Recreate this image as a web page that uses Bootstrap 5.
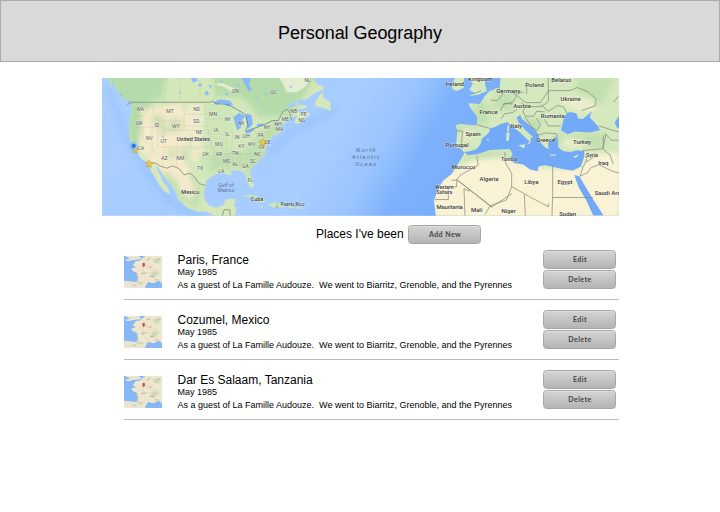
<!DOCTYPE html>
<html lang="en">
<head>
<meta charset="utf-8">
<meta name="viewport" content="width=device-width, initial-scale=1">
<title>Personal Geography</title>
<link rel="stylesheet" href="https://cdn.jsdelivr.net/npm/bootstrap@5.3.0/dist/css/bootstrap.min.css">
<style>
body{font-family:"Liberation Sans",Arial,sans-serif;color:#000;background:#fff;overflow:hidden}
.masthead{height:62px;background:#d9d9d9;border:1px solid #ababab;padding-top:5px}
.masthead h1{font-size:18px;letter-spacing:-.06px}
.page-body{width:517px;margin-left:102px;padding-top:16px}
.world{width:517px;height:137.5px;margin-bottom:.5px}
.toolbar-line{height:24px;padding-left:214px;padding-top:1px;margin-top:6px;gap:4px}
.toolbar-line h2{font-size:12px;width:88px;white-space:nowrap}
.btn.gray{width:73px;height:19px;padding:0 0 0 1px;font:bold 7px/17px Lato,sans-serif;letter-spacing:.45px;color:#444;border:1px solid #a6a6a6;border-radius:3.5px;background:linear-gradient(#d4d4d4,#b4b4b4);box-shadow:inset 0 1px 0 #dedede}
.places{margin-left:22px;width:495px;margin-top:-6px}
.place{height:60px;border-bottom:1px solid #bdbdbd}
.thumb{width:38px;height:32px;margin-top:16px;margin-left:-.5px}
.details{margin-left:16px;padding-top:13px;white-space:pre}
.details h3{font-size:12px;line-height:14px;margin-bottom:-1px!important}
.details p{font-size:9px;line-height:12px}
.details .note{line-height:14px}
.actions{padding-top:10px;gap:1px;margin-right:3px}
.world text{font-family:Roboto,sans-serif;font-size:15px;fill:#555;text-anchor:middle;stroke:#fff;stroke-opacity:.5;stroke-width:2.5px;paint-order:stroke}
.world .cty{font-size:18px;font-weight:500;fill:#3b3b3b}
.world .sea{font-style:italic;fill:#5f7090;stroke:none;font-size:18px}
</style>
<script src="https://cdn.jsdelivr.net/npm/bootstrap@5.3.0/dist/js/bootstrap.bundle.min.js"></script>
</head>
<body>
<header class="masthead d-flex align-items-center justify-content-center"><h1 class="m-0 fw-normal">Personal Geography</h1></header>
<main class="page-body">
<svg class="world d-block" viewBox="6 12 1551 413" preserveAspectRatio="none" role="img" aria-label="Map of places">
<defs>
<linearGradient id="ocean" x1="0" x2="1" y1="0" y2=".15"><stop offset="0" stop-color="#abd0ff"/><stop offset=".25" stop-color="#a6ccff"/><stop offset=".5" stop-color="#a8cdff"/><stop offset=".6" stop-color="#9bc5ff"/><stop offset=".68" stop-color="#7fb2fc"/><stop offset=".8" stop-color="#75abfb"/><stop offset="1" stop-color="#70a8fa"/></linearGradient>
<filter id="soft" x="-20%" y="-20%" width="140%" height="140%" color-interpolation-filters="sRGB"><feGaussianBlur stdDeviation="8"/></filter>
<filter id="haze" x="-30%" y="-30%" width="160%" height="160%" color-interpolation-filters="sRGB"><feGaussianBlur stdDeviation="10"/></filter>
<clipPath id="na"><path id="naShape" d="M20 12L35 32 55 50 62 65 80 78 93 91 95 105 90 130 88 160 87 190 95 215 110 235 125 257 145 266 152 290 165 310 175 330 190 350 210 362 205 342 190 325 180 302 165 275 175 280 190 305 215 335 230 360 232 375 260 400 290 413 318 413 345 426H396L404 426 410 405 402 395 408 377 396 373 376 378 370 394 348 402 328 396 314 378 311 352 317 335 320 318 345 302 365 293 380 302 396 304 390 290 420 290 432 296 440 320 452 342 462 340 458 318 449 297 452 285 470 268 485 252 495 240 498 220 502 205 515 190 530 181 545 172 540 160 555 145 575 130 592 126 582 146 592 150 632 121 618 112 600 118 590 108 620 101 618 94 595 92 560 105 575 82 620 75 640 60 671 46 671 38 650 30 640 12ZM645 85L660 62 671 55 668 68 690 84 693 112 679 105 645 96Z"/></clipPath>
<clipPath id="ea"><path id="eaShape" d="M1172 48L1200 40 1201 12H1557V426H1008L1002 380 1015 345 1030 320 1055 300 1065 285 1080 260 1092 240 1092 236 1080 222 1067 220 1070 195 1072 170 1067 155 1080 150 1130 155 1133 130 1110 100 1105 88 1140 90 1155 65ZM1107 66L1125 57 1108 48 1118 30 1108 12H1155L1155 30 1161 51 1135 62ZM1058 46L1055 30 1065 12H1092L1091 42 1070 51Z"/></clipPath>
</defs>
<rect x="6" y="12" width="1551" height="414" fill="url(#ocean)"/>
<g fill="none" stroke="#84b6fb" stroke-width="22" opacity=".3" filter="url(#haze)"><path d="M20 40L80 190 140 290 210 380 330 450M510 240L570 180 660 130 710 110M1120 100L1060 150 1060 220 1020 300 995 440"/></g>
<use href="#naShape" fill="#d4e8bb"/>
<g clip-path="url(#na)">
<g filter="url(#soft)">
<path fill="#b5dbaa" d="M10 0H240L210 90 160 75 140 110 125 175 110 210 90 230 70 100ZM340 0H650L580 120 480 130 430 70 340 65Z"/>
<path fill="#d3e8b9" d="M200 0H340L350 90 180 90Z"/>
<path fill="#f5eac9" d="M125 105L245 90 270 130 250 260 280 300 310 340 300 385 240 350 160 270 120 225Z"/>
<path fill="#eeebcb" d="M265 90H310V230L285 270 255 230Z"/>
<path fill="#cfe6b8" d="M310 90H400V300L305 315Z"/>
<path fill="#c0dfae" d="M330 240L430 230 510 150 580 120 500 240 450 330 430 280 330 290ZM270 290L310 350 290 400 240 380 185 295 205 300 265 350Z"/>
<path fill="#f3eacb" d="M215 290L265 300 290 350 270 380 240 350Z"/>
</g>
<g fill="#b4d8a3" opacity=".7" filter="url(#haze)"><circle cx="175" cy="140" r="18"/><circle cx="225" cy="155" r="20"/><circle cx="215" cy="240" r="13"/><circle cx="255" cy="235" r="14"/><circle cx="190" cy="170" r="12"/></g>
<path fill="#eef1dc" d="M530 5L545 22 560 55 590 55 615 40 630 12ZM340 30l30 8 25 15 8-10-35-15z" opacity=".8"/>
<path fill="#85b7fa" d="M425 12L440 42 448 53 456 45 447 32 452 12ZM339 85L360 76 390 80 400 92 380 96 367 87 348 93ZM400 130L418 117 438 128 427 136 423 160 412 170 405 148ZM440 118L455 124 458 152 445 165 438 138ZM437 175L463 163 460 171 441 181ZM470 151L488 149 493 155 472 158Z"/>
<g fill="#8dbcf8"><path d="M273 13l16-2 4 9-14 6zM294 31l10-3 2 7-9 2zM237 52l8 3-3 6zM313 55l10-5 4 11-9 4zM323 31l12 5-2 8zM494 58l7-3-1 9zM528 47l7 3-4 5zM480 37l5 2-3 6zM569 34l9 5-8 3zM186 184l5 4-3 6zM409 29l9 2-4 7zM360 18l9 4-6 4zM378 57l8 4-7 5zM465 72l9-3-3 6z"/><path d="M48 50l20 12-5 3zM75 76l22 9-6 4zM35 14l8 25-3 0z"/></g>
</g>
<g fill="#cce5b6"><path d="M428 370l20-9 31 10 23 14-23-1-25-15zM502 393l20-7 32 7 2 7-35 1zM474 396l17 2-5 4zM564 397l18 1-1 5-17-1zM572 84l25 3-7 3zM480 330l3 10-3-3zM588 401h20v4h-20z"/></g>
<g fill="none" stroke="#848a80" stroke-width="2.4"><path d="M80 94L93 85H331L338 81 347 89 378 91M145 268L167 268 179 276 201 283 217 276 237 284 252 303 270 298 283 309 297 329 317 335M535 139l15-28 12-5 8 11 5 22"/><path stroke="#567ca8" d="M378 91l12 4 22 12 25 15 7 30-7 21 60-23 20-10h18"/><path d="M367 426l5-18h18v18M531 392v12"/></g>
<g fill="none" stroke="#a8b3a0" stroke-width="1.4" stroke-dasharray="5 3" opacity=".75"><path d="M94 124l45 2 4-40M91 160h101v-23M128 160v35l57 57M156 160v60l0 23M156 85l5 36 12 20h79M252 85v83h-61v48M173 168v51h164M192 219l-5 55M231 219v61M252 121h70M252 156h66M252 169h85M270 181v45h25M295 220l-2 27 47 11M312 86l9 70 15 65M322 135h46M322 180h50M337 220h41M342 220l3 50h29M378 172l6 118M399 170l-4 67M427 177l-2 48M465 169l13 44M370 240h120M420 240v48M449 238l12 48M465 174h45M480 130l35 47M520 138l17 33M201 12l-8 73M240 12v73M300 12v73M347 12l3 77"/></g>
<use href="#eaShape" fill="#d4e9bd"/>
<g clip-path="url(#ea)">
<g filter="url(#soft)"><path fill="#faf2d5" d="M990 430L1010 330 1080 278 1160 240 1235 262 1330 285 1440 285 1460 245 1560 235V440Z"/><path fill="#c1dfaf" d="M1130 75L1170 100 1160 150 1120 150ZM1070 155L1120 155 1130 170 1075 180ZM1190 55H1240V110L1180 105ZM1250 130L1330 140 1300 195 1290 170ZM1080 255L1150 235 1240 235 1230 245 1150 255ZM1360 185L1510 180 1520 220 1370 220ZM1430 10H1540L1510 90 1430 55Z"/><path fill="#e9edcb" d="M1370 75L1470 70 1500 110 1430 115ZM1090 160l35 10-15 25-25-5ZM1395 190l65 10-10 20-70-3Z"/></g>
<path fill="#73a9f9" d="M1092 234L1110 232 1130 225 1142 210 1145 195 1165 178 1172 163 1185 159 1202 150 1222 145 1240 160 1257 173 1275 190 1288 202 1282 213 1291 207 1292 193 1300 190 1274 167 1256 145 1250 130 1261 123 1266 136 1285 151 1303 165 1316 183 1320 205 1335 220 1346 226 1344 208 1353 197 1371 188 1374 201 1374 220 1391 232 1411 234 1433 229 1447 232 1452 225 1453 246 1443 278 1419 290 1387 285 1355 278 1333 273 1315 278 1313 292 1290 287 1270 272 1242 267 1230 255 1238 240 1230 225 1170 228 1130 241 1103 243ZM1383 170L1393 126 1409 114 1429 118 1434 134 1448 135 1467 120 1475 112 1469 130 1494 157 1500 169 1470 176 1425 173 1403 181ZM1423 303L1438 307 1460 345 1485 385 1511 426H1480L1459 380 1436 340ZM1557 126L1544 145 1550 160 1557 165ZM1170 12H1201L1196 35 1174 52Z"/>
</g>
<g fill="#d5e8bf"><path d="M1220 175h9l-3 27-8-3zM1222 155h5v17h-5zM1254 214l22-3-4 13zM1349 242h19l-2 4-15-1zM1421 247l16-5-6 7-8 3zM1160 194l8 3-5 4z"/></g>
<g fill="none" stroke="#858579" stroke-width="2.1" stroke-linejoin="round">
<path d="M1133 153l38 11M1070 170l18 2-5 48M1130 247l5 27-55 30-10 15v20h-25v38h-40M1055 319h18l103 82M1095 425l-3-80 18 7M1072 319l104 80 60-40M1214 235l4 35 17 28 0 40 40 23 70 38v-10M1358 276v90l-2 60M1358 371h120M1235 338l-15 40-50 18-15 26M1273 362l3 63M1172 78l20 2 17-20-14-20M1209 92l30-8 12-20-10-5 30-4M1250 64l27 22 44 0 24-35M1201 110l12-22 25 2M1204 134l10-15 24-3 13-10M1280 24v36M1345 12v70l-20 16h-47l-14-12M1321 90l24 22 27-17 18 3 12 22M1279 97l-10 14 7 16h24l10-15 25 2M1276 130l20 30 15 10 10-18-12-20M1310 185l25-8 34 2 3 10M1334 136l10 20h38M1345 50l65 0 23-10M1433 41l30 12 25 21-1 21-42 15M1450 230l58-6 10-43M1508 224l22 19 10 28M1450 276l-10 31 22-10 10-15 25-10 40 20 20 5M1455 246l6 8-11 25M1488 245l-30 20M1497 156l59 18M1514 177l20 22 22 0M1510 183v40M1540 85l15-18M1120 60l24-10"/></g>
<g>
<text x="121" y="112">WA</text><text x="210" y="117">MT</text><text x="290" y="110">ND</text><text x="339" y="125">MN</text><text x="117" y="154">OR</text><text x="171" y="158">ID</text><text x="228" y="162">WY</text><text x="289" y="147">SD</text><text x="297" y="180">NE</text><text x="348" y="175">IA</text><text x="382" y="142">WI</text><text x="382" y="187">IL</text><text x="148" y="199">NV</text><text x="191" y="207">UT</text><text x="122" y="229">CA</text><text x="193" y="258">AZ</text><text x="241" y="258">NM</text><text x="317" y="246">OK</text><text x="357" y="217">MO</text><text x="357" y="247">AR</text><text x="380" y="268">MS</text><text x="300" y="287">TX</text><text x="364" y="298">LA</text><text x="406" y="57">ON</text><text x="521" y="61">QC</text><text x="623" y="23">NL</text><text x="423" y="154">MI</text><text x="411" y="195">IN</text><text x="439" y="192">OH</text><text x="482" y="188">PA</text><text x="501" y="164">NY</text><text x="534" y="155">NH</text><text x="538" y="172">MA</text><text x="556" y="140">ME</text><text x="581" y="118">NB</text><text x="611" y="125">PE</text><text x="605" y="144">NS</text><text x="424" y="223">KY</text><text x="455" y="215">WV</text><text x="484" y="226">VA</text><text x="503" y="209">DE</text><text x="473" y="245">NC</text><text x="406" y="244">TN</text><text x="459" y="266">SC</text><text x="436" y="282">GA</text><text x="406" y="275">AL</text><text x="451" y="323">FL</text>
</g>
<g><text class="cty" x="280" y="201" textLength="100">United States</text><text class="cty" x="271" y="360" textLength="54" lengthAdjust="spacingAndGlyphs">Mexico</text><text class="cty" x="471" y="381" style="font-size:16px">Cuba</text><text class="cty" x="578" y="395" textLength="71" lengthAdjust="spacingAndGlyphs" style="font-size:16px">Puerto Rico</text><text class="cty" x="1064" y="35">Ireland</text><text class="cty" x="1141" y="20">Kingdom</text><text class="cty" x="1166" y="121">France</text><text class="cty" x="1119" y="185">Spain</text><text class="cty" x="1071" y="218">Portugal</text><text class="cty" x="1091" y="284">Morocco</text><text class="cty" x="1167" y="320">Algeria</text><text class="cty" x="1033" y="346" style="font-size:15px">Western</text><text class="cty" x="1033" y="361" style="font-size:15px">Sahara</text><text class="cty" x="1049" y="405" textLength="79">Mauritania</text><text class="cty" x="1130" y="415">Mali</text><text class="cty" x="1225" y="57">Germany</text><text class="cty" x="1304" y="38">Poland</text><text class="cty" x="1384" y="23">Belarus</text><text class="cty" x="1412" y="81">Ukraine</text><text class="cty" x="1266" y="101" style="font-size:16px">Austria</text><text class="cty" x="1358" y="131">Romania</text><text class="cty" x="1249" y="161">Italy</text><text class="cty" x="1337" y="204">Greece</text><text class="cty" x="1446" y="210">Turkey</text><text class="cty" x="1227" y="261" style="font-size:15px">Tunisia</text><text class="cty" x="1476" y="249" style="font-size:16px">Syria</text><text class="cty" x="1510" y="273">Iraq</text><text class="cty" x="1294" y="331">Libya</text><text class="cty" x="1395" y="331">Egypt</text><text class="cty" x="1484" y="363" style="text-anchor:start">Saudi Ara</text><text class="cty" x="1226" y="418">Niger</text><text class="cty" x="1403" y="427">Sudan</text></g>
<g><text class="sea" x="378" y="339" style="font-size:16px">Gulf of</text><text class="sea" x="378" y="355" style="font-size:16px">Mexico</text><text class="sea" x="799" y="235" letter-spacing="3.5">North</text><text class="sea" x="799" y="255" letter-spacing="3.5">Atlantic</text><text class="sea" x="799" y="275" letter-spacing="3.5">Ocean</text></g>
<g fill="#ffc928" stroke="#ad8338" stroke-width="1.2"><path id="pin" d="M147 259l3 7 8 1-6 5 2 8-7-4-7 4 2-8-6-5 8-1z"/><use href="#pin" x="-41" y="-43"/><use href="#pin" x="341" y="-65"/></g>
<circle cx="101" cy="217" r="14" fill="#78adff" opacity=".5"/><circle cx="101" cy="216" r="8" fill="#2879ef" stroke="#eef" stroke-width="1.5"/>
</svg>
<div class="toolbar-line d-flex align-items-center"><h2 class="m-0 fw-normal">Places I've been</h2><button class="btn gray" type="button">Add New</button></div>
<section class="places">
<article class="place d-flex">
<svg class="thumb flex-shrink-0" viewBox="0 0 114 96" aria-hidden="true"><g id="franceMap"><path fill="#eee6cf" d="M0 0h114v96H0z"/><path fill="#86b8f5" d="M0 0H63L50 13 35 16 26 29 37 33 21 38 27 46 39 50 43 68 37 78 0 75ZM64 91l8-13 17 4 16-8 9 8v14H64Z"/><path fill="#e9e5d2" d="M3 0h41l10 9-29 4-14 3-8-5 15-3zM0 76l38 3 27 6-3 11H0z"/><path fill="#cbdcb6" d="M90 8l18 5-4 11-17-7zM40 75l20 7-7 5-18-7zM75 63l15-17 17 5-19 15zM63 26l7 2-3 6z"/><path fill="none" stroke="#d5c6aa" stroke-width="1.3" d="M58 20l16 12 22 8-7 17 7 20M56 25L37 50l3 27M59 24l-3 32 20 21M59 28l31 18 22 0M41 78l24 3M63 14l15-9 13 7 23-2M55 50h33l10 12"/><path fill="#e2453a" d="M55 23q4-6 8 0l-1 7-3 4-3-4z"/><path fill="none" stroke="#8c8c7b" stroke-width="2" opacity=".65" d="M50 52h16M25 88h12M80 61h8M69 10h9M98 9h11M95 72h9M75 33h8"/></g></svg>
<div class="details flex-grow-1"><h3 class="m-0 fw-normal">Paris, France</h3><p class="m-0">May 1985</p><p class="m-0 note">As a guest of La Famille Audouze.  We went to Biarritz, Grenoble, and the Pyrennes</p></div>
<div class="actions d-flex flex-column"><button class="btn gray" type="button">Edit</button><button class="btn gray" type="button">Delete</button></div>
</article>
<article class="place d-flex">
<svg class="thumb flex-shrink-0" viewBox="0 0 114 96" aria-hidden="true"><use href="#franceMap"/></svg>
<div class="details flex-grow-1"><h3 class="m-0 fw-normal">Cozumel, Mexico</h3><p class="m-0">May 1985</p><p class="m-0 note">As a guest of La Famille Audouze.  We went to Biarritz, Grenoble, and the Pyrennes</p></div>
<div class="actions d-flex flex-column"><button class="btn gray" type="button">Edit</button><button class="btn gray" type="button">Delete</button></div>
</article>
<article class="place d-flex">
<svg class="thumb flex-shrink-0" viewBox="0 0 114 96" aria-hidden="true"><use href="#franceMap"/></svg>
<div class="details flex-grow-1"><h3 class="m-0 fw-normal">Dar Es Salaam, Tanzania</h3><p class="m-0">May 1985</p><p class="m-0 note">As a guest of La Famille Audouze.  We went to Biarritz, Grenoble, and the Pyrennes</p></div>
<div class="actions d-flex flex-column"><button class="btn gray" type="button">Edit</button><button class="btn gray" type="button">Delete</button></div>
</article>
</section>
</main>
</body>
</html>
